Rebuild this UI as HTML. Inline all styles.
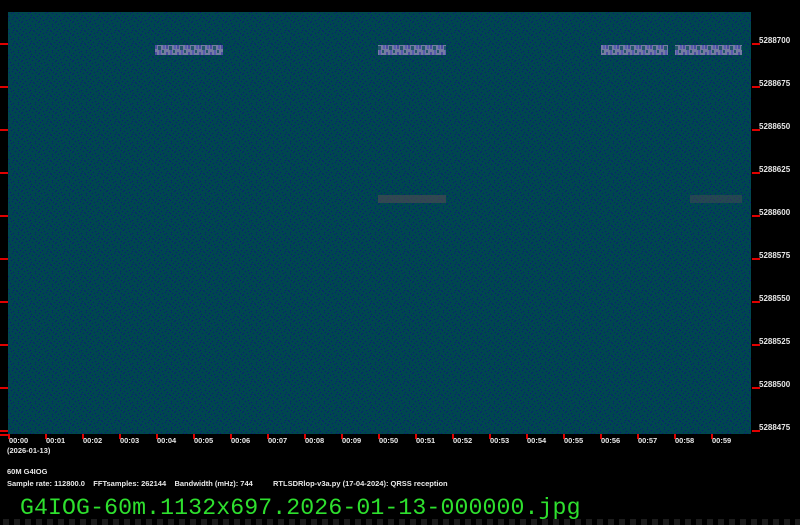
<!DOCTYPE html>
<html><head><meta charset="utf-8"><style>
body{margin:0;width:800px;height:525px;background:#000;position:relative;overflow:hidden;font-family:"Liberation Sans",sans-serif}
.t{position:absolute;color:#e8e8e8;font-size:7.5px;font-weight:bold;white-space:nowrap}
.fl{position:absolute;left:759px;color:#e8e8e8;font-size:8px;font-weight:bold}
</style></head><body>
<svg width="800" height="525" style="position:absolute;left:0;top:0">
<defs>
<pattern id="n" width="17" height="13" patternUnits="userSpaceOnUse">
<rect width="17" height="13" fill="#00464f"/>
<g fill="#0d1c78">
<rect x="1" y="0" width="1" height="1"/><rect x="5" y="1" width="1" height="1"/><rect x="11" y="0" width="1" height="1"/><rect x="14" y="2" width="1" height="1"/><rect x="3" y="3" width="1" height="1"/><rect x="8" y="3" width="1" height="1"/><rect x="16" y="4" width="1" height="1"/><rect x="0" y="5" width="1" height="1"/><rect x="6" y="5" width="1" height="1"/><rect x="12" y="6" width="1" height="1"/><rect x="2" y="7" width="1" height="1"/><rect x="9" y="7" width="1" height="1"/><rect x="15" y="8" width="1" height="1"/><rect x="4" y="9" width="1" height="1"/><rect x="10" y="10" width="1" height="1"/><rect x="1" y="11" width="1" height="1"/><rect x="7" y="11" width="1" height="1"/><rect x="13" y="12" width="1" height="1"/><rect x="13" y="4" width="1" height="1"/><rect x="5" y="8" width="1" height="1"/>
</g></pattern>
<pattern id="s" width="11" height="10" patternUnits="userSpaceOnUse">
<rect width="11" height="10" fill="#8a86b0"/>
<rect x="1" y="2" width="2" height="7" fill="#5a50b0"/><rect x="5" y="0" width="2" height="5" fill="#6a62c0"/><rect x="4" y="6" width="3" height="4" fill="#2a5a70"/><rect x="8" y="0" width="2" height="3" fill="#2a5a70"/><rect x="9" y="5" width="2" height="4" fill="#6a62c0"/>
</pattern>
</defs>
<rect x="8" y="12" width="743" height="422" fill="url(#n)"/>
<g opacity="0.85">
<rect x="155" y="45" width="68" height="10" fill="url(#s)"/>
<rect x="378" y="45" width="68" height="10" fill="url(#s)"/>
<rect x="601" y="45" width="67" height="10" fill="url(#s)"/>
<rect x="675" y="45" width="67" height="10" fill="url(#s)"/>
</g>
<rect x="378" y="195" width="68" height="8" fill="#5a4c52" opacity="0.55"/>
<rect x="690" y="195" width="52" height="8" fill="#5a4c52" opacity="0.4"/>
<g fill="#1c1c1c">
<rect x="3" y="519" width="6" height="6"/><rect x="14" y="519" width="6" height="6"/><rect x="25" y="519" width="6" height="6"/><rect x="36" y="519" width="6" height="6"/><rect x="47" y="519" width="6" height="6"/><rect x="58" y="519" width="6" height="6"/><rect x="69" y="519" width="6" height="6"/><rect x="80" y="519" width="6" height="6"/><rect x="91" y="519" width="6" height="6"/><rect x="102" y="519" width="6" height="6"/><rect x="113" y="519" width="6" height="6"/><rect x="124" y="519" width="6" height="6"/><rect x="135" y="519" width="6" height="6"/><rect x="146" y="519" width="6" height="6"/><rect x="157" y="519" width="6" height="6"/><rect x="168" y="519" width="6" height="6"/><rect x="179" y="519" width="6" height="6"/><rect x="190" y="519" width="6" height="6"/><rect x="201" y="519" width="6" height="6"/><rect x="212" y="519" width="6" height="6"/><rect x="223" y="519" width="6" height="6"/><rect x="234" y="519" width="6" height="6"/><rect x="245" y="519" width="6" height="6"/><rect x="256" y="519" width="6" height="6"/><rect x="267" y="519" width="6" height="6"/><rect x="278" y="519" width="6" height="6"/><rect x="289" y="519" width="6" height="6"/><rect x="300" y="519" width="6" height="6"/><rect x="311" y="519" width="6" height="6"/><rect x="322" y="519" width="6" height="6"/><rect x="333" y="519" width="6" height="6"/><rect x="344" y="519" width="6" height="6"/><rect x="355" y="519" width="6" height="6"/><rect x="366" y="519" width="6" height="6"/><rect x="377" y="519" width="6" height="6"/><rect x="388" y="519" width="6" height="6"/><rect x="399" y="519" width="6" height="6"/><rect x="410" y="519" width="6" height="6"/><rect x="421" y="519" width="6" height="6"/><rect x="432" y="519" width="6" height="6"/><rect x="443" y="519" width="6" height="6"/><rect x="454" y="519" width="6" height="6"/><rect x="465" y="519" width="6" height="6"/><rect x="476" y="519" width="6" height="6"/><rect x="487" y="519" width="6" height="6"/><rect x="498" y="519" width="6" height="6"/><rect x="509" y="519" width="6" height="6"/><rect x="520" y="519" width="6" height="6"/><rect x="531" y="519" width="6" height="6"/><rect x="542" y="519" width="6" height="6"/><rect x="553" y="519" width="6" height="6"/><rect x="564" y="519" width="6" height="6"/><rect x="575" y="519" width="6" height="6"/><rect x="586" y="519" width="6" height="6"/><rect x="597" y="519" width="6" height="6"/><rect x="608" y="519" width="6" height="6"/><rect x="619" y="519" width="6" height="6"/><rect x="630" y="519" width="6" height="6"/><rect x="641" y="519" width="6" height="6"/><rect x="652" y="519" width="6" height="6"/><rect x="663" y="519" width="6" height="6"/><rect x="674" y="519" width="6" height="6"/><rect x="685" y="519" width="6" height="6"/><rect x="696" y="519" width="6" height="6"/><rect x="707" y="519" width="6" height="6"/><rect x="718" y="519" width="6" height="6"/><rect x="729" y="519" width="6" height="6"/><rect x="740" y="519" width="6" height="6"/><rect x="751" y="519" width="6" height="6"/><rect x="762" y="519" width="6" height="6"/><rect x="773" y="519" width="6" height="6"/><rect x="784" y="519" width="6" height="6"/><rect x="795" y="519" width="6" height="6"/>
</g>
<g fill="#e00000">
<rect x="752" y="43" width="8" height="2"/><rect x="752" y="86" width="8" height="2"/><rect x="752" y="129" width="8" height="2"/><rect x="752" y="172" width="8" height="2"/><rect x="752" y="215" width="8" height="2"/><rect x="752" y="258" width="8" height="2"/><rect x="752" y="301" width="8" height="2"/><rect x="752" y="344" width="8" height="2"/><rect x="752" y="387" width="8" height="2"/><rect x="752" y="430" width="8" height="2"/>
<rect x="0" y="43" width="8" height="2"/><rect x="0" y="86" width="8" height="2"/><rect x="0" y="129" width="8" height="2"/><rect x="0" y="172" width="8" height="2"/><rect x="0" y="215" width="8" height="2"/><rect x="0" y="258" width="8" height="2"/><rect x="0" y="301" width="8" height="2"/><rect x="0" y="344" width="8" height="2"/><rect x="0" y="387" width="8" height="2"/><rect x="0" y="430" width="8" height="2"/>
<rect x="0" y="434" width="8" height="2"/>
<rect x="8" y="434" width="2" height="5"/><rect x="45" y="434" width="2" height="5"/><rect x="82" y="434" width="2" height="5"/><rect x="119" y="434" width="2" height="5"/><rect x="156" y="434" width="2" height="5"/><rect x="193" y="434" width="2" height="5"/><rect x="230" y="434" width="2" height="5"/><rect x="267" y="434" width="2" height="5"/><rect x="304" y="434" width="2" height="5"/><rect x="341" y="434" width="2" height="5"/><rect x="378" y="434" width="2" height="5"/><rect x="415" y="434" width="2" height="5"/><rect x="452" y="434" width="2" height="5"/><rect x="489" y="434" width="2" height="5"/><rect x="526" y="434" width="2" height="5"/><rect x="563" y="434" width="2" height="5"/><rect x="600" y="434" width="2" height="5"/><rect x="637" y="434" width="2" height="5"/><rect x="674" y="434" width="2" height="5"/><rect x="711" y="434" width="2" height="5"/>
</g>
</svg>
<div class="fl" style="top:36px">5288700</div>
<div class="fl" style="top:79px">5288675</div>
<div class="fl" style="top:122px">5288650</div>
<div class="fl" style="top:165px">5288625</div>
<div class="fl" style="top:208px">5288600</div>
<div class="fl" style="top:251px">5288575</div>
<div class="fl" style="top:294px">5288550</div>
<div class="fl" style="top:337px">5288525</div>
<div class="fl" style="top:380px">5288500</div>
<div class="fl" style="top:423px">5288475</div>
<div class="t" style="top:436px;left:9px">00:00</div>
<div class="t" style="top:436px;left:46px">00:01</div>
<div class="t" style="top:436px;left:83px">00:02</div>
<div class="t" style="top:436px;left:120px">00:03</div>
<div class="t" style="top:436px;left:157px">00:04</div>
<div class="t" style="top:436px;left:194px">00:05</div>
<div class="t" style="top:436px;left:231px">00:06</div>
<div class="t" style="top:436px;left:268px">00:07</div>
<div class="t" style="top:436px;left:305px">00:08</div>
<div class="t" style="top:436px;left:342px">00:09</div>
<div class="t" style="top:436px;left:379px">00:50</div>
<div class="t" style="top:436px;left:416px">00:51</div>
<div class="t" style="top:436px;left:453px">00:52</div>
<div class="t" style="top:436px;left:490px">00:53</div>
<div class="t" style="top:436px;left:527px">00:54</div>
<div class="t" style="top:436px;left:564px">00:55</div>
<div class="t" style="top:436px;left:601px">00:56</div>
<div class="t" style="top:436px;left:638px">00:57</div>
<div class="t" style="top:436px;left:675px">00:58</div>
<div class="t" style="top:436px;left:712px">00:59</div>
<div class="t" style="top:446px;left:7px">(2026-01-13)</div>
<div class="t" style="top:467px;left:7px">60M G4IOG</div>
<div class="t" style="top:479px;left:7px">Sample rate: 112800.0&nbsp;&nbsp;&nbsp;&nbsp;FFTsamples: 262144&nbsp;&nbsp;&nbsp;&nbsp;Bandwidth (mHz): 744</div>
<div class="t" style="top:479px;left:273px">RTLSDRlop-v3a.py (17-04-2024): QRSS reception</div>
<div style="position:absolute;left:20px;top:495px;font-family:'Liberation Mono',monospace;font-size:23.2px;color:#2ee02e;white-space:nowrap;line-height:26px;letter-spacing:0.1px">G4IOG-60m.1132x697.2026-01-13-000000.jpg</div>
</body></html>
